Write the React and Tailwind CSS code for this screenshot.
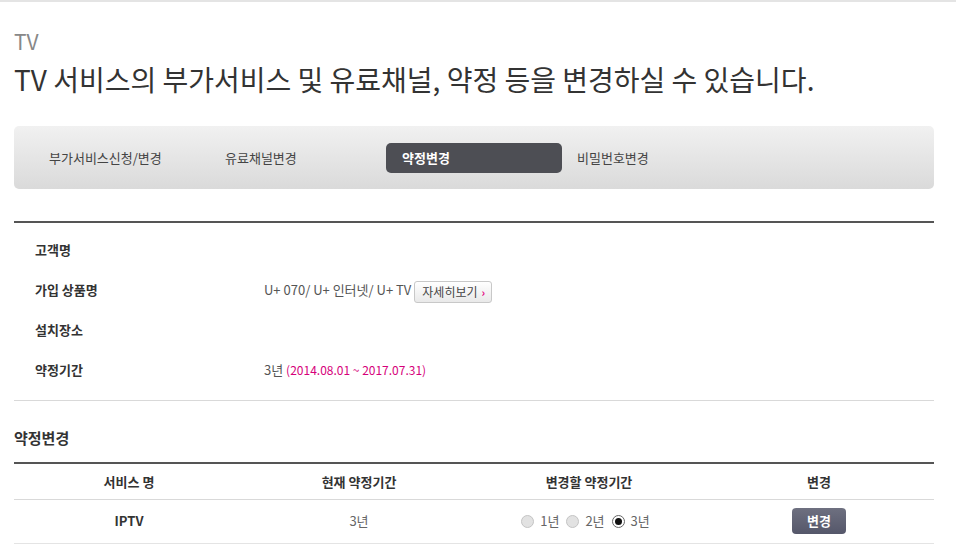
import React from "react";

const FONT = { fontFamily: '"Noto Sans CJK KR", "Noto Sans", sans-serif' };

const TABS = ["부가서비스신청/변경", "유료채널변경", "약정변경", "비밀번호변경"];

const INFO = [
  { label: "고객명", value: null },
  { label: "가입 상품명", value: "product" },
  { label: "설치장소", value: null },
  { label: "약정기간", value: "period" },
];

const Radio = ({ checked, label }) => (
  <label className="flex items-center gap-[6px] mr-[7px]">
    {checked ? (
      <span className="w-[13px] h-[13px] rounded-full border border-[#666] bg-white flex items-center justify-center">
        <span className="w-[7px] h-[7px] rounded-full bg-[#111]" />
      </span>
    ) : (
      <span className="w-[13px] h-[13px] rounded-full border border-[#c4c4c4] bg-[#e2e2e2]" />
    )}
    <span className="text-[13px] text-[#666]">{label}</span>
  </label>
);

const App = () => {
  return (
    <div className="w-[956px] h-[559px] overflow-hidden bg-white border-t-2 border-[#e4e4e4]" style={FONT}>
      <div className="ml-[14px] w-[920px]">
        {/* Title */}
        <div className="pt-[25px] text-[21px] leading-[28px] text-[#888]">TV</div>
        <h1 className="mt-[6px] text-[28px] leading-[36px] font-normal text-[#333]">
          TV 서비스의 부가서비스 및 유료채널, 약정 등을 변경하실 수 있습니다.
        </h1>

        {/* Tabs */}
        <nav className="mt-[29px] h-[63px] rounded-[5px] bg-gradient-to-b from-[#f1f1f1] to-[#dadada] flex items-center pl-[20px]">
          {TABS.map((tab, i) =>
            i === 2 ? (
              <div
                key={tab}
                className="w-[176px] h-[30px] rounded-[5px] bg-[#4d4e54] flex items-center pl-[16px] text-[13px] font-bold text-white"
              >
                {tab}
              </div>
            ) : (
              <div key={tab} className="w-[176px] h-[30px] flex items-center pl-[15px] text-[13px] text-[#444]">
                {tab}
              </div>
            )
          )}
        </nav>

        {/* Info */}
        <div className="mt-[32px] border-t-2 border-[#555] border-b border-b-[#d9d9d9] pt-[7px] pb-[10px]">
          {INFO.map((row) => (
            <div key={row.label} className="h-[40px] flex items-center">
              <div className="w-[250px] pl-[21px] text-[13px] font-bold text-[#333]">{row.label}</div>
              <div className="text-[13px] text-[#555] flex items-center">
                {row.value === "product" && (
                  <>
                    <span>U+ 070/ U+ 인터넷/ U+ TV</span>
                    <button className="ml-[3px] mt-[4px] h-[22px] pl-[7px] pr-[6px] border border-[#c8c8c8] rounded-[3px] bg-gradient-to-b from-white to-[#e9e9e9] text-[12px] text-[#444] flex items-center gap-[4px]">
                      자세히보기
                      <span className="text-[#e4007f] text-[11px] font-bold leading-none">›</span>
                    </button>
                  </>
                )}
                {row.value === "period" && (
                  <span>
                    3년 <span className="text-[12px] text-[#d6007a]">(2014.08.01 ~ 2017.07.31)</span>
                  </span>
                )}
              </div>
            </div>
          ))}
        </div>

        {/* Contract change */}
        <h2 className="mt-[26px] text-[15px] leading-[22px] font-bold text-[#333]">약정변경</h2>
        <table className="mt-[13px] w-full border-t-2 border-[#555] table-fixed text-[13px]">
          <thead>
            <tr className="h-[36px] border-b border-[#d9d9d9]">
              <th className="font-bold text-[#333]">서비스 명</th>
              <th className="font-bold text-[#333]">현재 약정기간</th>
              <th className="font-bold text-[#333]">변경할 약정기간</th>
              <th className="font-bold text-[#333]">변경</th>
            </tr>
          </thead>
          <tbody>
            <tr className="h-[44px] border-b border-[#e4e4e4]">
              <td className="text-center font-bold text-[#333]">IPTV</td>
              <td className="text-center text-[#666]">3년</td>
              <td>
                <div className="flex items-center justify-center">
                  <Radio label="1년" />
                  <Radio label="2년" />
                  <Radio label="3년" checked />
                </div>
              </td>
              <td className="text-center">
                <button className="w-[54px] h-[26px] rounded-[4px] bg-gradient-to-b from-[#6e7080] to-[#55576a] text-white text-[13px] font-bold">
                  변경
                </button>
              </td>
            </tr>
          </tbody>
        </table>
      </div>
    </div>
  );
};

export default App;
